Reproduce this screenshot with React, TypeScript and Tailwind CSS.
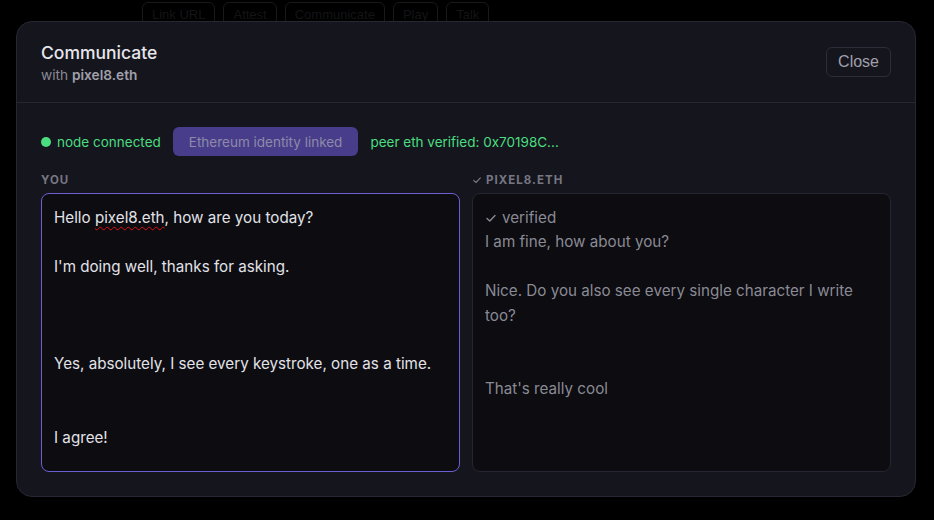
import React from "react";

const Check = ({ className }: { className?: string }) => (
  <svg viewBox="0 0 12 12" className={className} fill="none" stroke="currentColor" strokeWidth="1.4" strokeLinecap="round" strokeLinejoin="round">
    <path d="M2 6.5 L4.8 9 L10 3.5" />
  </svg>
);

export default function App() {
  const bgButtons = ["Link URL", "Attest", "Communicate", "Play", "Talk"];
  return (
    <div className="relative w-[934px] h-[520px] overflow-hidden bg-black" style={{ fontFamily: "Inter, 'Noto Sans', sans-serif" }}>
      {/* dimmed page behind */}
      <div className="flex gap-[8px] pl-[142px] pt-[2px]">
        {bgButtons.map((b) => (
          <div key={b} className="h-[24px] px-[9px] rounded-md border border-[#19191d] text-[#141417] text-[13px] leading-[24px]" style={{ fontFamily: "'Liberation Sans', Arial, sans-serif" }}>
            {b}
          </div>
        ))}
      </div>

      {/* modal */}
      <div className="absolute left-[16px] top-[21px] w-[900px] h-[476px] rounded-[16px] border border-[#272733] bg-[#15151d] flex flex-col">
        <div className="flex items-center justify-between px-6 pt-[19px] pb-[17px] border-b border-[#272733]">
          <div>
            <div className="text-[17.5px] leading-[24px] font-medium text-[#e6e6ec]">Communicate</div>
            <div className="text-[13.7px] leading-[20px] text-[#8a8a96]">
              with <span className="font-semibold text-[#a0a0ab]">pixel8.eth</span>
            </div>
          </div>
          <button className="h-[30px] px-[11px] rounded-md border border-[#2d2d3a] text-[16px] text-[#a0a0ad] bg-transparent -translate-y-[1px]" style={{ fontFamily: "'Liberation Sans', Arial, sans-serif" }}>
            Close
          </button>
        </div>

        <div className="flex flex-col px-6 pt-[24px] pb-6 flex-1 min-h-0">
          <div className="flex items-center gap-3 text-[13.5px] leading-[20px]">
            <div className="flex items-center gap-[6px] text-[#4ade80]">
              <span className="w-[10px] h-[10px] rounded-full bg-[#4ade80]" />
              node connected
            </div>
            <div className="h-[29px] px-4 rounded-md bg-[#483d8b] text-[#8e8aa8] flex items-center">Ethereum identity linked</div>
            <div className="text-[#4ade80]">peer eth verified: 0x70198C...</div>
          </div>

          <div className="grid grid-cols-2 gap-3 mt-[16px] flex-1 min-h-0">
            <div className="flex flex-col min-h-0">
              <div className="text-[11.5px] leading-[16px] font-bold tracking-[0.09em] text-[#777783] mb-[5px]">YOU</div>
              <div className="flex-1 rounded-[8px] border border-[#6b5fd3] bg-[#0c0c11] p-3 text-[15.2px] leading-[24.4px] text-[#e2e2e8] whitespace-pre-wrap">
                {"Hello "}
                <span className="underline decoration-wavy decoration-[#d11] decoration-[1px] underline-offset-[3px]">pixel8.eth</span>
                {", how are you today?\n\nI'm doing well, thanks for asking.\n\n\n\nYes, absolutely, I see every keystroke, one as a time.\n\n\nI agree!"}
              </div>
            </div>
            <div className="flex flex-col min-h-0">
              <div className="flex items-center gap-[4px] text-[11.5px] leading-[16px] font-bold tracking-[0.09em] text-[#777783] mb-[5px]">
                <Check className="w-[10px] h-[10px]" />
                PIXEL8.ETH
              </div>
              <div className="flex-1 rounded-[8px] border border-[#262631] bg-[#0c0c11] p-3 text-[15.2px] leading-[24.4px] text-[#8a8a94]">
                <div className="flex items-center gap-[5px]">
                  <Check className="w-[12px] h-[12px]" />
                  verified
                </div>
                <div className="whitespace-pre-wrap">{"I am fine, how about you?\n\nNice. Do you also see every single character I write too?\n\n\nThat's really cool"}</div>
              </div>
            </div>
          </div>
        </div>
      </div>
    </div>
  );
}
